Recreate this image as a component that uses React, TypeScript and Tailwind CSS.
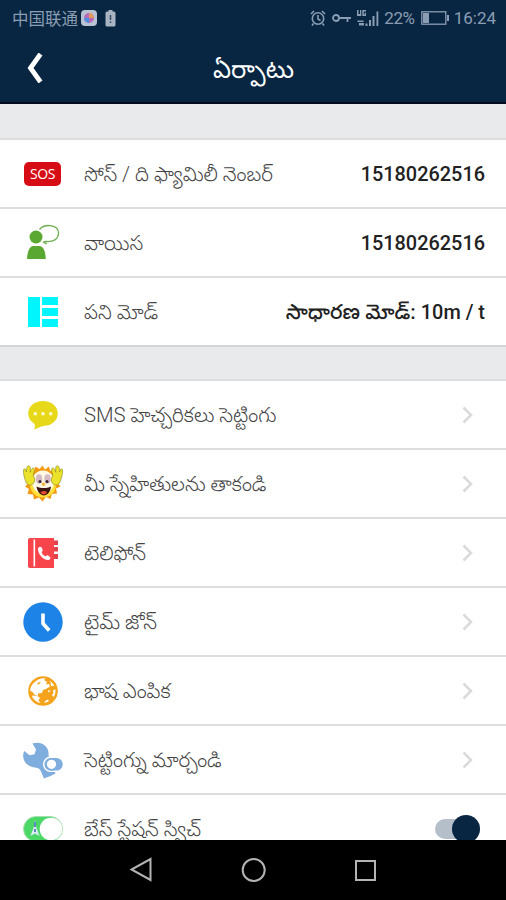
import type { ReactNode } from "react";

type Row = {
  label: string;
  icon: ReactNode;
  value?: ReactNode;
};

function SosIcon() {
  return (
    <div className="flex h-6 w-[37px] items-center justify-center rounded-[5px] bg-[#d60d14] font-['Open_Sans',sans-serif] text-[14px] leading-none font-medium tracking-[-0.4px] text-white">
      SOS
    </div>
  );
}

function VoiceIcon() {
  return (
    <svg width="40" height="40" viewBox="0 0 40 40">
      <circle cx="13" cy="14" r="6.5" fill="#5aa832" />
      <path d="M4 36C4.500 27 7 23.500 10 23h6.500c3.500.3 5.800 4 6.300 13z" fill="#5aa832" />
      <path
        d="M16.500 6.500C19 3.300 23 2.300 27 2.600c5.500.4 9 3.500 8.500 8.200-.5 5-4.500 7.600-10 7.800-2 .1-3.400-.7-5 .6l3.500 1.800"
        fill="none"
        stroke="#6fae50"
        strokeWidth="1.400"
      />
    </svg>
  );
}

function WorkModeIcon() {
  return (
    <svg width="30" height="30" viewBox="0 0 30 30" fill="#00f6fc">
      <path d="M0 0h12v30H0zM14 0h16v8H14zM14 11h16v8H14zM14 22h16v8H14z" />
    </svg>
  );
}

function SmsIcon() {
  return (
    <svg width="30" height="30" viewBox="0 0 30 30">
      <path
        d="M15 1C23.400 1 29.800 6.400 29.800 13.600S23.400 25.800 16 26C12 26.200 10 28.400 6 29.400c1-2 1.200-3.600.5-5.400C2.500 21.400.2 18 .2 13.600.2 6.400 6.600 1 15 1z"
        fill="#e8d81a"
      />
      <path d="M5.800 12.200h3v3h-3zM13.500 12.200h3v3h-3zM21.200 12.200h3v3h-3z" fill="#fffbd8" />
    </svg>
  );
}

const handPath =
  "M3.500 19C1.500 15 0 9.500.6 5.500 1.600 4 3 5 3.400 8 3.200 4.500 4 1.800 5.800 1.800c1.800 0 1.500 3.500 1.400 6.500C8 5 9.500 3.500 11 4.300c1.200 1.500-.6 4.700-.8 7.700 1.500 1.600 2 3 1 6-1.200 3.200-5.700 4.500-7.700 1z";

function SunIcon() {
  return (
    <svg width="40" height="40" viewBox="0 0 40 40">
      <path
        d="M19.500 1.500l2.500 4 4-3 1.200 4.500 5-1-.6 5.500 4.600 3-2.200 4 3.500 4-4.500 2 1 5-5 .5-1.500 5-4.500-2-3.500 4.500-3.500-4-5 2-1-5-5.500-.5 1.500-5-4-2.500 3.500-3.500-3-4.500 4.500-2.500-1-5 5 .5 1.500-5 4 2.500z"
        fill="#f39a12"
      />
      <circle cx="20" cy="20.500" r="13" fill="#ffdf3c" />
      <ellipse cx="20" cy="18" rx="11" ry="11.500" fill="#fff8e4" />
      <ellipse cx="16" cy="15" rx="3.200" ry="4.800" fill="#d5b9c4" />
      <ellipse cx="24.500" cy="15" rx="3.200" ry="4.800" fill="#d5b9c4" />
      <circle cx="17" cy="17.500" r="1.500" fill="#3c2730" />
      <circle cx="24" cy="17.500" r="1.500" fill="#3c2730" />
      <circle cx="20.500" cy="20.300" r="1.700" fill="#f7b23c" />
      <path d="M13.500 22.500c4.500 2 10 2 14.500 0-.6 5.500-3.600 9-7.100 9s-6.500-3.500-7.400-9z" fill="#3a1410" />
      <path d="M17.500 28.500c2-2 5-2 6.500 0-2 2.800-4.500 2.800-6.500 0z" fill="#e24a35" />
      <path d={handPath} fill="#ebe22c" stroke="#8a8320" strokeWidth=".6" />
      <path d={handPath} transform="translate(40 0) scale(-1 1)" fill="#ebe22c" stroke="#8a8320" strokeWidth=".6" />
    </svg>
  );
}

function PhoneBookIcon() {
  return (
    <svg width="30" height="30" viewBox="0 0 30 30">
      <path d="M2 0h24v30H2a2 2 0 0 1-2-2V2a2 2 0 0 1 2-2z" fill="#f8454c" />
      <path d="M5.500 1.500h1.600v27H5.500z" fill="#fff" />
      <path d="M26 2.500h4V7h-4zM26 9h4v4.500h-4zM26 16h4v5h-4z" fill="#e0434c" />
      <path
        d="M10 10.500c.2-1.500 2.800-2.600 3.500-1.200l1.200 2.800c.3 1-.8 1.400-1 2.300.6 1.800 2 3.200 4 3.900.8-.2 1.300-1.300 2.300-.8l2 1.500c1.200 1-.3 2.900-1.800 3-5.300 0-10.500-6-10.200-11.500z"
        fill="#fff"
      />
    </svg>
  );
}

function ClockIcon() {
  return (
    <svg width="40" height="40" viewBox="0 0 40 40">
      <circle cx="20" cy="20" r="19.700" fill="#1e83e6" />
      <path d="M20 11.500v10l6.200 7" fill="none" stroke="#fff" strokeWidth="3.600" />
    </svg>
  );
}

function GlobeIcon() {
  return (
    <svg width="30" height="30" viewBox="0 0 30 30">
      <circle cx="15" cy="15" r="14.800" fill="#f5a31c" />
      <path
        d="M8 5c3-2.300 6-3 9.500-2.500L16 4l3 2-1 2.500 3-.5 1 2.500-4 2.500-3 1-1 3-4 .5 0 2.500-3-1-2.500-3L2 14.500C2.500 10 5 7 8 5z"
        fill="#fff"
      />
      <path d="M5 19.500l4 .5 3 1.500-1.500 3 2 2.500C9 26.500 5.500 24 4 20z" fill="#fff" />
      <path d="M21 4.500c2.500 1.300 4.500 3.300 5.500 6L25 9.500l-1.500 1-1-2 .5-1.500z" fill="#fff" />
      <path d="M25 14l2.500-.5c.2 3-.5 5.500-2 7.500L24 19l1.500-2zM17 25l3-1.500 1 1.500c-1.500 1-3 1.500-4.500 1.700zM20 14l2.500 1-2 1.500z" fill="#fff" />
      <path d="M11 6l2 .5-2.500 2L9 8z" fill="#f5a31c" />
    </svg>
  );
}

function WrenchIcon() {
  return (
    <svg width="40" height="40" viewBox="0 0 40 40">
      <path
        d="M9.500 3.500C13 2.500 16 2.500 18.500 3.500c4.500 2 7 5.500 7 9.500 0 2.500.2 4.500 2 7.500l5 13-5 2.500-6.500 2.500-3.500-8c-1.500-2.500-3-2.700-6-3C5 26.500 1 22.500.3 17.500 0 15.300.3 12.500 1.300 11l5.200 4.200 5-1L13 9.500z"
        fill="#7fadde"
      />
      <rect x="20" y="16.500" width="22" height="15.500" rx="7.500" fill="#fff" />
      <rect x="21.500" y="18" width="18.200" height="12.600" rx="6.300" fill="#7fadde" />
      <circle cx="28.500" cy="24.300" r="5.500" fill="#fff" stroke="#7fadde" strokeWidth="1.800" />
    </svg>
  );
}

function StationIcon() {
  return (
    <svg width="40" height="26" viewBox="0 0 40 26">
      <rect x=".5" y=".5" width="39" height="25" rx="12.500" fill="#4bd866" stroke="#a5dfb0" />
      <circle cx="28" cy="13" r="11.300" fill="#fff" />
      <path d="M12 4l1.200 7 3.300 9-4.500-2.500L7.500 20l3.300-9z" fill="#dcebf5" />
      <path d="M11 6h2v5h-2zM11 13h2v3h-2z" fill="#5b8bc0" />
    </svg>
  );
}

const infoRows: Row[] = [
  { label: "సోస్ / ది ఫ్యామిలీ నెంబర్", icon: <SosIcon />, value: "15180262516" },
  { label: "వాయిస", icon: <VoiceIcon />, value: "15180262516" },
  {
    label: "పని మోడ్",
    icon: <WorkModeIcon />,
    value: (
      <>
        <span className="text-[20.8px]">సాధారణ మోడ్:</span> 10m / t
      </>
    ),
  },
];

const settingRows: Row[] = [
  { label: "SMS హెచ్చరికలు సెట్టింగు", icon: <SmsIcon /> },
  { label: "మీ స్నేహితులను తాకండి", icon: <SunIcon /> },
  { label: "టెలిఫోన్", icon: <PhoneBookIcon /> },
  { label: "టైమ్ జోన్", icon: <ClockIcon /> },
  { label: "భాష ఎంపిక", icon: <GlobeIcon /> },
  { label: "సెట్టింగ్ను మార్చండి", icon: <WrenchIcon /> },
];

function ListRow({ row, children }: { row: Row; children?: ReactNode }) {
  return (
    <div className="flex h-[69px] shrink-0 items-center border-t-2 border-[#dcdddf] bg-white pr-[21px] pl-[22px]">
      <div className="flex w-[41px] shrink-0 justify-center">{row.icon}</div>
      <span className="ml-[21px] pt-0.5 text-[20.3px] leading-none font-light whitespace-nowrap text-[#444]">{row.label}</span>
      <div className="ml-auto flex items-center">{children}</div>
    </div>
  );
}

function StatusBar() {
  return (
    <div className="flex h-9 items-center pr-[10px] pl-3 text-[#8b9db2]">
      <span className="font-['Noto_Sans_CJK_SC',sans-serif] text-[16.500px] leading-none">中国联通</span>
      <svg className="ml-[3px]" width="16" height="16" viewBox="0 0 16 16">
        <rect width="16" height="16" rx="4" fill="#b9c3d3" />
        <circle cx="8" cy="8" r="5" fill="#b56bb9" />
        <path d="M8 8V3a5 5 0 0 1 5 5z" fill="#e39a5c" />
        <path d="M8 8H3a5 5 0 0 0 5 5z" fill="#4f8fe0" />
      </svg>
      <svg className="ml-2" width="11" height="17" viewBox="0 0 11 17">
        <path d="M3.500 0h4v1.500H9a1.500 1.500 0 0 1 1.500 1.500v12A1.500 1.500 0 0 1 9 16.500H2A1.500 1.500 0 0 1 .5 15V3A1.500 1.500 0 0 1 2 1.500h1.500z" fill="#a9b4c2" />
        <path d="M5.500 5v5M5.500 11.500v1.500" stroke="#334a63" strokeWidth="1.500" />
      </svg>
      <div className="ml-auto flex items-center">
        <svg width="16" height="16" viewBox="0 0 16 16" fill="none" stroke="currentColor" strokeWidth="1.600">
          <circle cx="8" cy="8.500" r="5.700" />
          <path d="M8 5v4l2.500 1.500M1 4l3-3M15 4l-3-3M3.500 13.500L2 15.500M12.500 13.500l1.500 2" />
        </svg>
        <svg className="ml-[6px]" width="19" height="10" viewBox="0 0 19 10" fill="none" stroke="currentColor" strokeWidth="1.800">
          <circle cx="4" cy="5" r="3" />
          <path d="M7 5h12M15.500 5v4" />
        </svg>
        <svg className="ml-[6px]" width="23" height="17" viewBox="0 0 23 17" fill="currentColor">
          <path d="M0 0h1.500v4H3V0h1.300v6H0zM5.300 0h3.700v1.500H6.800v3H7.700V2.800H9V6H5.300zM.5 10.500h6V12h-6zM2 13h5v2.500H2zM8.500 13.500h2v2.500h-2zM12 10h2v6h-2zM15.500 6h2v10h-2zM19.500 1.500h1.800V16h-1.800z" />
        </svg>
        <span className="ml-1 text-[17px] leading-none tracking-[-0.4px]">22%</span>
        <svg className="ml-[6px]" width="28" height="14" viewBox="0 0 28 14">
          <rect x=".8" y=".8" width="24" height="12.400" fill="none" stroke="currentColor" strokeWidth="1.300" />
          <path d="M2 2h6v10H2zM26 4h2v6h-2z" fill="currentColor" />
        </svg>
        <span className="ml-[5px] text-[17px] leading-none">16:24</span>
      </div>
    </div>
  );
}

export default function App() {
  return (
    <div className="flex h-[900px] w-[506px] flex-col overflow-hidden bg-[#e9eaec] font-[Roboto,'Noto_Sans_Telugu','Noto_Sans',sans-serif]">
      <header className="h-[104px] shrink-0 border-b-2 border-[#050b1c] bg-[#082642]">
        <StatusBar />
        <div className="flex h-16 items-center">
          <svg className="ml-[27px]" width="17" height="30" viewBox="0 0 17 30">
            <path d="M13.500 1L3.500 15l10 14" fill="none" stroke="#fff" strokeWidth="4.800" />
          </svg>
          <h1 className="ml-[169px] pt-1 text-[25.4px] leading-none whitespace-nowrap text-white">ఏర్పాటు</h1>
        </div>
      </header>

      <main className="flex min-h-0 flex-1 flex-col overflow-hidden pt-[34px]">
        {infoRows.map((row) => (
          <ListRow key={row.label} row={row}>
            <span className="pt-0.5 text-[19.9px] leading-none font-medium whitespace-nowrap text-[#222]">{row.value}</span>
          </ListRow>
        ))}
        <div className="h-[34px] shrink-0 border-t-2 border-[#d4d5d7]" />
        {settingRows.map((row) => (
          <ListRow key={row.label} row={row}>
            <svg className="mr-[11px]" width="13" height="18" viewBox="0 0 13 18">
              <path d="M2.500 1.500L10 9l-7.500 7.500" fill="none" stroke="#dadada" strokeWidth="2.500" />
            </svg>
          </ListRow>
        ))}
        <ListRow row={{ label: "బేస్ స్టేషన్ స్విచ్", icon: <StationIcon /> }}>
          <div className="mr-[5px] flex h-5 w-[45px] items-center justify-end rounded-full bg-[#b4bfca]">
            <div className="size-7 shrink-0 rounded-full bg-[#082642]" />
          </div>
        </ListRow>
      </main>

      <nav className="flex h-[60px] shrink-0 items-center bg-black">
        <svg className="ml-[129px]" width="24" height="26" viewBox="0 0 24 26" fill="none" stroke="#b4b4b4" strokeWidth="2">
          <path d="M21.500 2v21L2.500 12.500z" />
        </svg>
        <svg className="ml-[88px]" width="26" height="26" viewBox="0 0 26 26" fill="none" stroke="#b4b4b4" strokeWidth="2">
          <circle cx="12.700" cy="13" r="11" />
        </svg>
        <div className="ml-[88px] size-[21px] border-2 border-[#b4b4b4]" />
      </nav>
    </div>
  );
}
